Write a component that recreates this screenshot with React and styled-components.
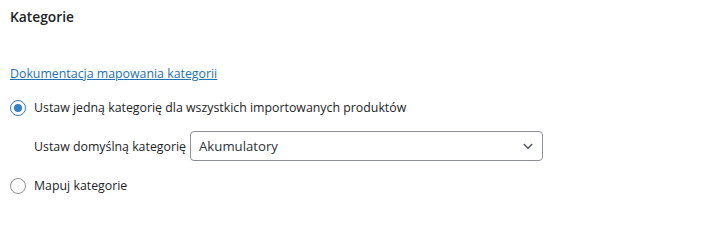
import React from 'react';
import styled, { createGlobalStyle } from 'styled-components';

const GlobalStyle = createGlobalStyle`
	body {
		margin: 0;
		background: #ffffff;
		font-family: "Open Sans", "Noto Sans", sans-serif;
		font-size: 12.35px;
		color: #1d2327;
	}
`;

const Panel = styled.div`
	padding: 8px 10px;
	width: 721px;
	height: 203px;
	box-sizing: border-box;
`;

const Title = styled.h2`
	margin: 0;
	font-size: 13.8px;
	line-height: 18px;
	font-weight: 600;
`;

const DocLink = styled.a`
	display: inline-block;
	margin-top: 39px;
	color: #2271b1;
	text-decoration: underline;
	line-height: 18px;
`;

const Options = styled.div`
	display: flex;
	flex-direction: column;
	margin-top: 16px;
`;

const RadioRow = styled.label`
	display: flex;
	align-items: center;
	gap: 8px;
	line-height: 18px;
	cursor: pointer;
`;

const RadioDot = styled.span`
	width: 16px;
	height: 16px;
	box-sizing: border-box;
	border-radius: 50%;
	border: 1px solid ${props => (props.checked ? '#3582c4' : '#8c8f94')};
	display: flex;
	align-items: center;
	justify-content: center;
	flex-shrink: 0;

	&::after {
		content: '';
		display: ${props => (props.checked ? 'block' : 'none')};
		width: 8px;
		height: 8px;
		border-radius: 50%;
		background: #3582c4;
	}
`;

const DefaultRow = styled.div`
	display: flex;
	align-items: center;
	gap: 4px;
	padding-left: 24px;
	margin-top: 14px;
`;

const SelectBox = styled.div`
	width: 353px;
	height: 30px;
	box-sizing: border-box;
	border: 1px solid #8c8f94;
	border-radius: 4px;
	display: flex;
	align-items: center;
	justify-content: space-between;
	padding: 0 9px 0 8px;
	font-size: 13.2px;
	color: #2c3338;
`;

const SecondRow = styled(RadioRow)`
	margin-top: 16px;
`;

function Radio({ checked, children, as: Row = RadioRow }) {
	return (
		<Row>
			<RadioDot checked={checked} />
			<span>{children}</span>
		</Row>
	);
}

export default function App() {
	return (
		<>
			<GlobalStyle />
			<Panel>
				<Title>Kategorie</Title>
				<DocLink href="#">Dokumentacja mapowania kategorii</DocLink>
				<Options>
					<Radio checked>
						Ustaw jedną kategorię dla wszystkich importowanych produktów
					</Radio>
					<DefaultRow>
						<span>Ustaw domyślną kategorię</span>
						<SelectBox>
							<span>Akumulatory</span>
							<svg width="10" height="10" viewBox="0 0 10 10">
								<path
									d="M0.8 3l4.2 4.2L9.2 3"
									fill="none"
									stroke="#50575e"
									strokeWidth="1.5"
								/>
							</svg>
						</SelectBox>
					</DefaultRow>
					<Radio as={SecondRow}>Mapuj kategorie</Radio>
				</Options>
			</Panel>
		</>
	);
}
